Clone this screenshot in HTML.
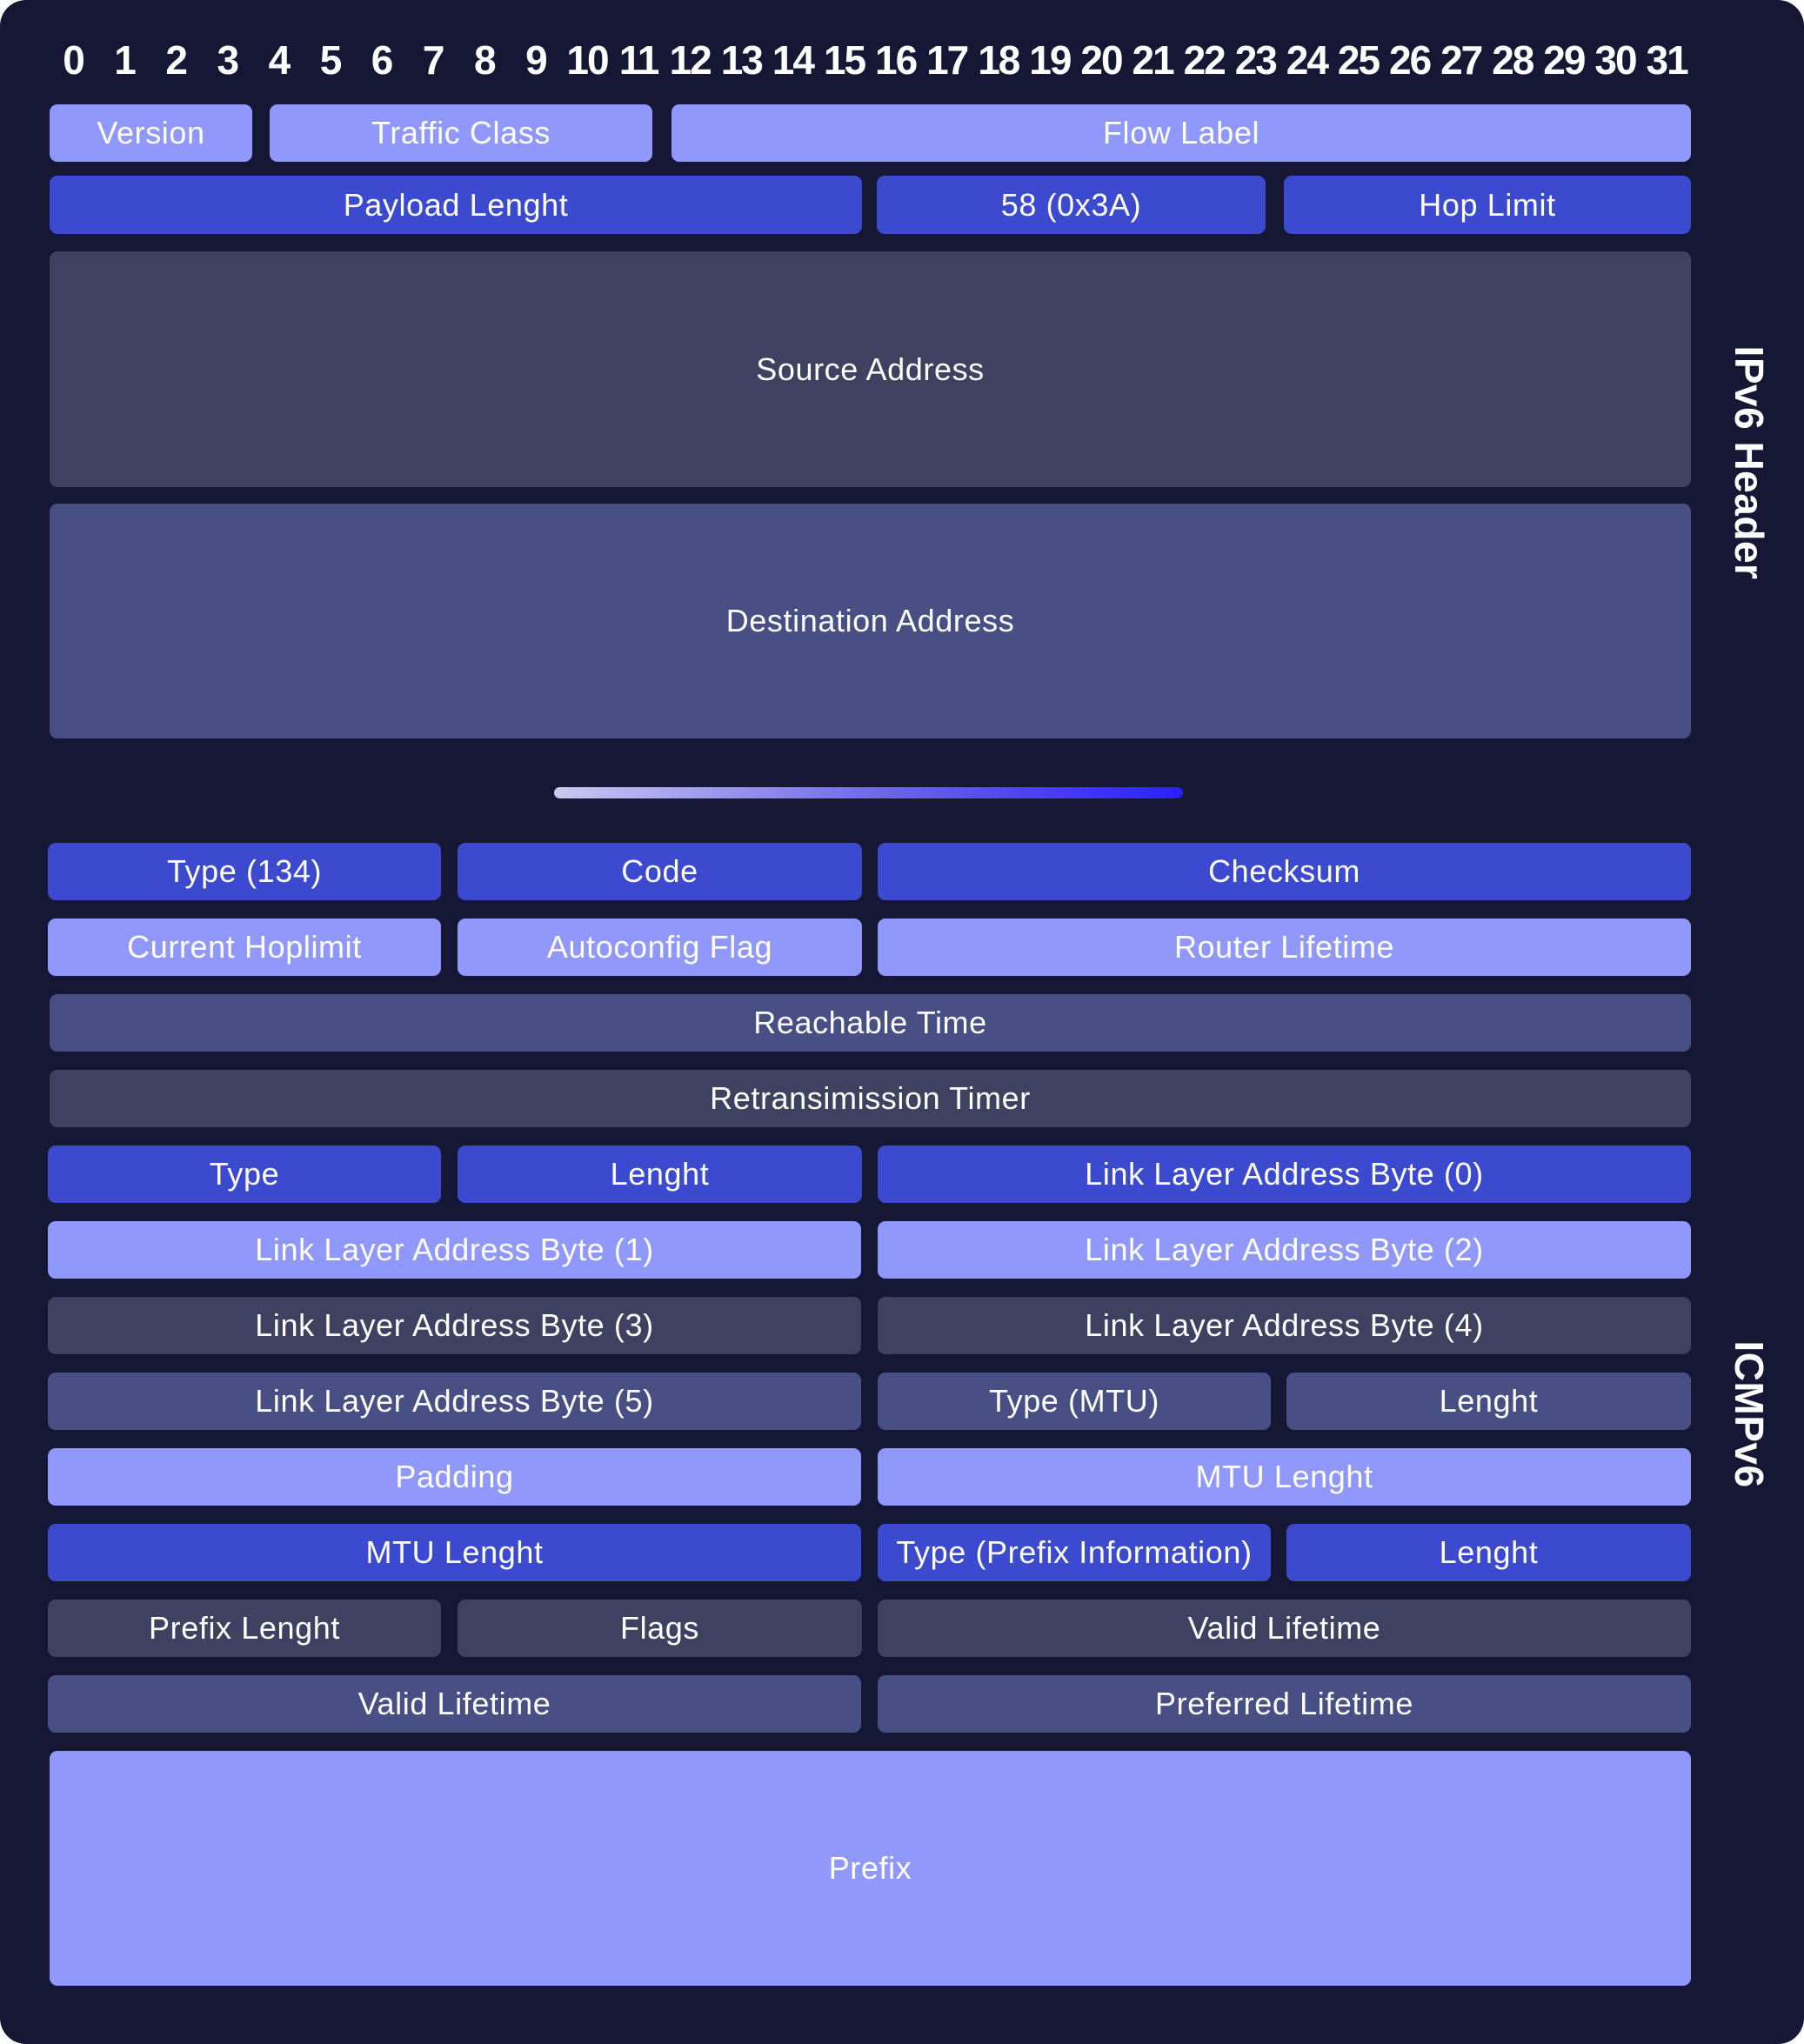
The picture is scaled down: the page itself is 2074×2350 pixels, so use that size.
<!DOCTYPE html>
<html><head><meta charset="utf-8"><style>
html,body{margin:0;padding:0;background:#fff;}
#c{position:relative;width:2074px;height:2350px;background:#151735;border-radius:30px;overflow:hidden;font-family:"Liberation Sans",sans-serif;color:#fff;}
.b{position:absolute;border-radius:9px;display:flex;align-items:center;justify-content:center;font-size:36px;letter-spacing:0.6px;white-space:nowrap;}
.L{background:#9099fb}.B{background:#3b4ace}.G{background:#3e4260}.S{background:#474f85}
.n{position:absolute;top:42px;width:60px;text-align:center;font-size:46px;font-weight:bold;letter-spacing:-2px;}
.r{position:absolute;transform:translate(-50%,-50%) rotate(90deg);font-size:46px;font-weight:bold;white-space:nowrap;letter-spacing:0.5px;}
</style></head><body><div id="c">
<div id="nums"></div>
<div class="b L" style="left:57px;top:120px;width:233px;height:66px">Version</div>
<div class="b L" style="left:310px;top:120px;width:440px;height:66px">Traffic Class</div>
<div class="b L" style="left:772px;top:120px;width:1172px;height:66px">Flow Label</div>
<div class="b B" style="left:57px;top:202px;width:934px;height:67px">Payload Lenght</div>
<div class="b B" style="left:1008px;top:202px;width:447px;height:67px">58 (0x3A)</div>
<div class="b B" style="left:1476px;top:202px;width:468px;height:67px">Hop Limit</div>
<div class="b G" style="left:57px;top:289px;width:1887px;height:271px">Source Address</div>
<div class="b S" style="left:57px;top:579px;width:1887px;height:270px">Destination Address</div>
<div style="position:absolute;left:637px;top:905px;width:723px;height:13px;border-radius:7px;background:linear-gradient(90deg,#c8c8f0,#6a62e8 55%,#2a1fff)"></div>

<div class="b B" style="left:55px;top:969px;width:452px;height:66px">Type (134)</div>
<div class="b B" style="left:526px;top:969px;width:465px;height:66px">Code</div>
<div class="b B" style="left:1009px;top:969px;width:935px;height:66px">Checksum</div>

<div class="b L" style="left:55px;top:1056px;width:452px;height:66px">Current Hoplimit</div>
<div class="b L" style="left:526px;top:1056px;width:465px;height:66px">Autoconfig Flag</div>
<div class="b L" style="left:1009px;top:1056px;width:935px;height:66px">Router Lifetime</div>

<div class="b S" style="left:57px;top:1143px;width:1887px;height:66px">Reachable Time</div>
<div class="b G" style="left:57px;top:1230px;width:1887px;height:66px">Retransimission Timer</div>

<div class="b B" style="left:55px;top:1317px;width:452px;height:66px">Type</div>
<div class="b B" style="left:526px;top:1317px;width:465px;height:66px">Lenght</div>
<div class="b B" style="left:1009px;top:1317px;width:935px;height:66px">Link Layer Address Byte (0)</div>

<div class="b L" style="left:55px;top:1404px;width:935px;height:66px">Link Layer Address Byte (1)</div>
<div class="b L" style="left:1009px;top:1404px;width:935px;height:66px">Link Layer Address Byte (2)</div>

<div class="b G" style="left:55px;top:1491px;width:935px;height:66px">Link Layer Address Byte (3)</div>
<div class="b G" style="left:1009px;top:1491px;width:935px;height:66px">Link Layer Address Byte (4)</div>

<div class="b S" style="left:55px;top:1578px;width:935px;height:66px">Link Layer Address Byte (5)</div>
<div class="b S" style="left:1009px;top:1578px;width:452px;height:66px">Type (MTU)</div>
<div class="b S" style="left:1479px;top:1578px;width:465px;height:66px">Lenght</div>

<div class="b L" style="left:55px;top:1665px;width:935px;height:66px">Padding</div>
<div class="b L" style="left:1009px;top:1665px;width:935px;height:66px">MTU Lenght</div>

<div class="b B" style="left:55px;top:1752px;width:935px;height:66px">MTU Lenght</div>
<div class="b B" style="left:1009px;top:1752px;width:452px;height:66px">Type (Prefix Information)</div>
<div class="b B" style="left:1479px;top:1752px;width:465px;height:66px">Lenght</div>

<div class="b G" style="left:55px;top:1839px;width:452px;height:66px">Prefix Lenght</div>
<div class="b G" style="left:526px;top:1839px;width:465px;height:66px">Flags</div>
<div class="b G" style="left:1009px;top:1839px;width:935px;height:66px">Valid Lifetime</div>

<div class="b S" style="left:55px;top:1926px;width:935px;height:66px">Valid Lifetime</div>
<div class="b S" style="left:1009px;top:1926px;width:935px;height:66px">Preferred Lifetime</div>

<div class="b L" style="left:57px;top:2013px;width:1887px;height:270px">Prefix</div>

<div class="r" style="left:2011px;top:532px">IPv6 Header</div>
<div class="r" style="left:2011px;top:1626px">ICMPv6</div>
</div>
<script>
var h='';for(var i=0;i<32;i++){h+='<div class="n" style="left:'+(54+59.1*i).toFixed(1)+'px">'+i+'</div>';}
document.getElementById('nums').innerHTML=h;
</script>
</body></html>
